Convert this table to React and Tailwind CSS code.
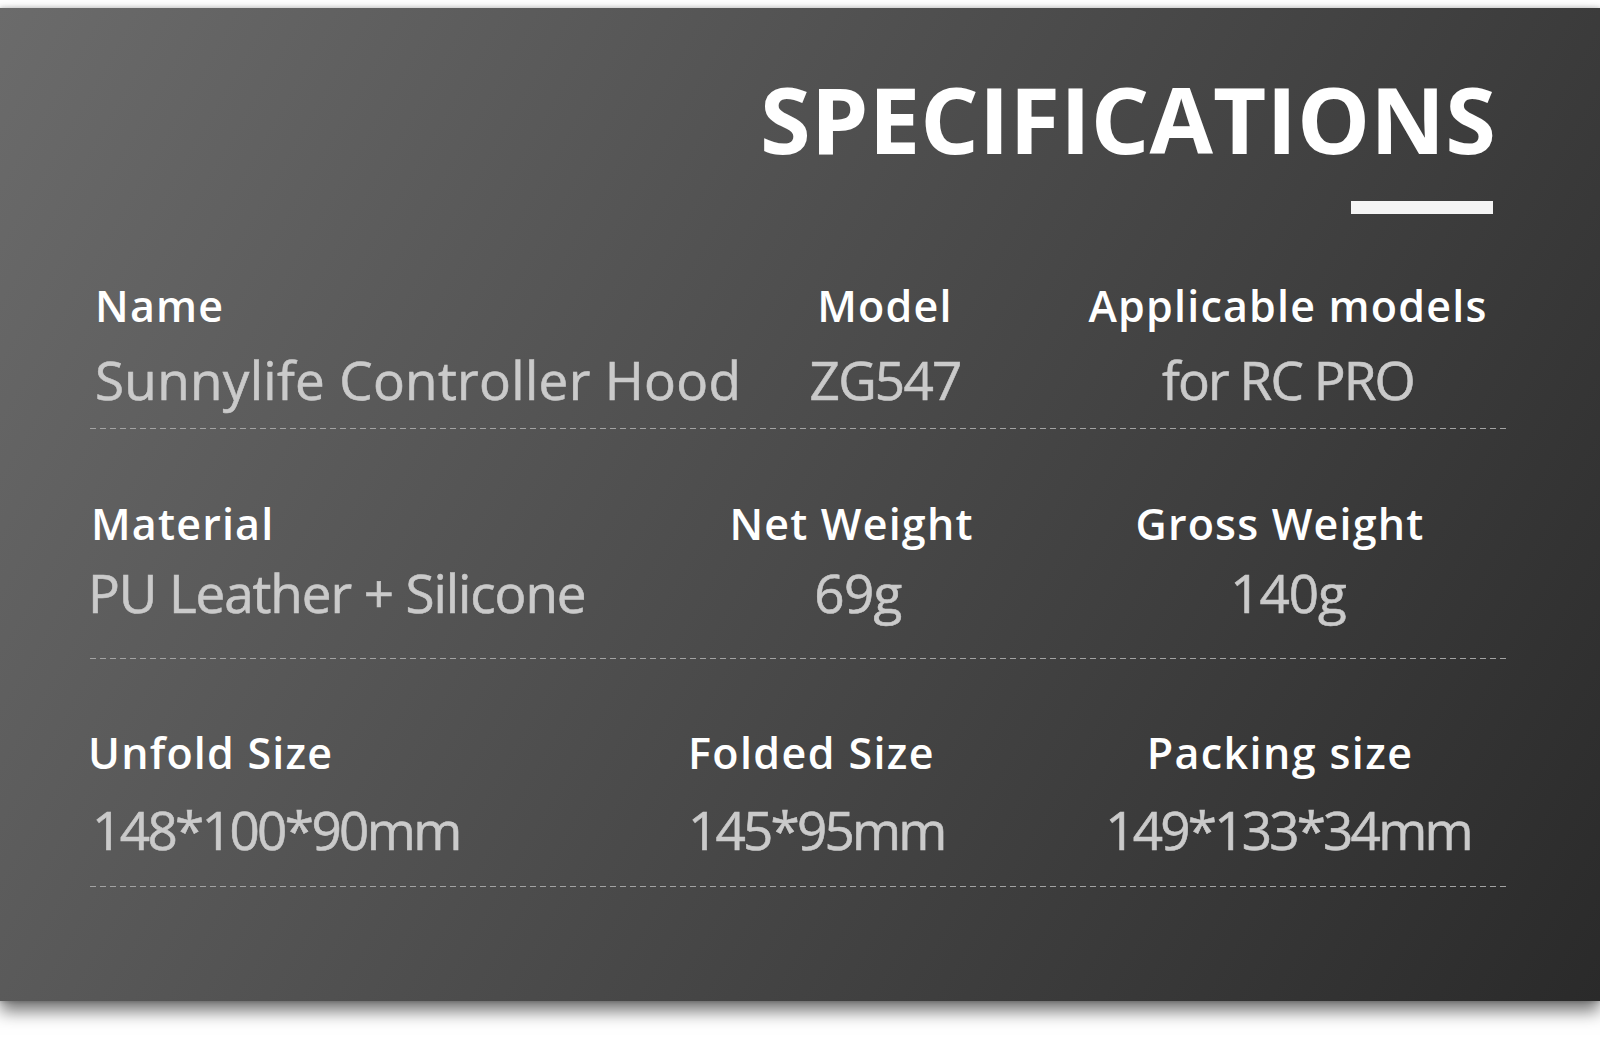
import React from "react";

const font = { fontFamily: "'Open Sans', 'Noto Sans', sans-serif" };

function Dash() {
  return (
    <div className="ml-[90px] w-[1419px] h-px bg-[repeating-linear-gradient(to_right,#a3a3a3_0px,#a3a3a3_6px,transparent_6px,transparent_10px)]" />
  );
}

function Label({ children, className = "" }) {
  return (
    <div className={"text-[43px] leading-none font-semibold text-white whitespace-nowrap tracking-[1.2px] " + className}>
      {children}
    </div>
  );
}

function Value({ children, className = "" }) {
  return (
    <div className={"text-[53px] leading-none font-normal text-[#cacaca] whitespace-nowrap [-webkit-text-stroke:0.6px_#cacaca] " + className}>
      {children}
    </div>
  );
}

export default function App() {
  return (
    <div className="w-[1600px] h-[1042px] bg-white overflow-hidden" style={font}>
      <div className="mt-[8px] h-[993px] bg-[linear-gradient(120deg,#6b6b6b_0%,#2a2a2a_100%)] shadow-[0_10px_16px_rgba(0,0,0,0.55),0_0_5px_rgba(0,0,0,0.25)] flex flex-col">
        {/* Title */}
        <div className="pt-[65px] pr-[104px] flex flex-col items-end">
          <h1 className="text-[92px] leading-none font-bold text-white tracking-[0.1px]">SPECIFICATIONS</h1>
          <div className="mt-[36px] mr-[3px] w-[142px] h-[13px] bg-[#f4f4f4]" />
        </div>

        {/* Row 1 */}
        <div className="mt-[70px] flex">
          <div className="ml-[95px] w-[690px] flex flex-col">
            <Label>Name</Label>
            <Value className="mt-[26px] tracking-[0.3px]">Sunnylife Controller Hood</Value>
          </div>
          <div className="w-[200px] flex flex-col items-center">
            <Label>Model</Label>
            <Value className="mt-[26px] tracking-[-1.8px]">ZG547</Value>
          </div>
          <div className="ml-[83px] w-[440px] flex flex-col items-center">
            <Label>Applicable models</Label>
            <Value className="mt-[26px] tracking-[-1.9px]">for RC PRO</Value>
          </div>
        </div>
        <div className="mt-[22px]">
          <Dash />
        </div>

        {/* Row 2 */}
        <div className="mt-[73px] flex">
          <div className="ml-[91px] w-[659px] flex flex-col">
            <Label className="tracking-[0.9px]">Material</Label>
            <Value className="mt-[21px] -ml-[3px] tracking-[-1.1px]">PU Leather + Silicone</Value>
          </div>
          <div className="w-[200px] flex flex-col items-center">
            <Label className="tracking-[0.7px] pl-[3px]">Net Weight</Label>
            <Value className="mt-[21px] pl-[16px] tracking-[-0.7px]">69g</Value>
          </div>
          <div className="ml-[118px] w-[440px] flex flex-col items-center">
            <Label className="pr-[16px] tracking-[0.9px]">Gross Weight</Label>
            <Value className="mt-[21px] tracking-[-1px]">140g</Value>
          </div>
        </div>
        <div className="mt-[39px]">
          <Dash />
        </div>

        {/* Row 3 */}
        <div className="mt-[72px] flex">
          <div className="ml-[88px] w-[600px] flex flex-col">
            <Label>Unfold Size</Label>
            <Value className="mt-[29px] ml-[4px] tracking-[-2.6px]">148*100*90mm</Value>
          </div>
          <div className="w-[380px] flex flex-col">
            <Label className="tracking-[1.4px]">Folded Size</Label>
            <Value className="mt-[29px] tracking-[-2.8px]">145*95mm</Value>
          </div>
          <div className="w-[440px] flex flex-col items-center">
            <Label className="pr-[16px] tracking-[1.4px]">Packing size</Label>
            <Value className="mt-[29px] tracking-[-2.8px]">149*133*34mm</Value>
          </div>
        </div>
        <div className="mt-[30px]">
          <Dash />
        </div>
      </div>
    </div>
  );
}
